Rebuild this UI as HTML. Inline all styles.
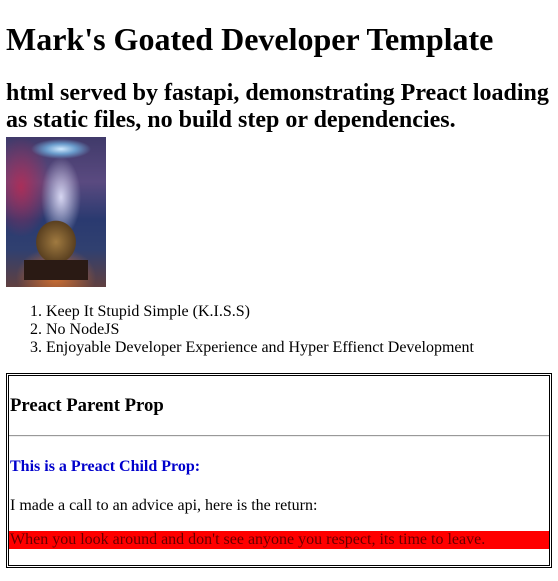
<!DOCTYPE html>
<html><head><meta charset="utf-8"><style>
body{margin:8px 6px;font-family:"Liberation Serif",serif;color:#000;background:#fff;font-size:16px}
h1{font-size:32px;margin:21.44px 0;line-height:37px}
h2{font-size:24px;margin:19.92px 0 2px;line-height:27.6px}
.img{width:100px;height:150px;position:relative;overflow:hidden;
background:
radial-gradient(ellipse 30px 10px at 55px 12px,#cfe9ff 0,#6a9ccc 50%,transparent 100%),
radial-gradient(ellipse 20px 40px at 55px 60px,rgba(230,230,255,.9),transparent),
radial-gradient(ellipse 30px 50px at 15px 50px,rgba(190,40,80,.8),transparent),
radial-gradient(ellipse 40px 30px at 50px 140px,#d07030,transparent),
linear-gradient(#403a6a 0%,#5a4a80 30%,#2a3a70 55%,#304070 75%,#604040 100%)}
.body{position:absolute;left:22px;top:70px;width:56px;height:60px;background:radial-gradient(ellipse 28px 30px at 28px 35px,#a07a40,#5a4020 70%,transparent 72%)}
.base{position:absolute;left:18px;top:123px;width:64px;height:20px;background:#2a1a14}
ol{margin:16px 0;padding-left:40px;line-height:18px}
.box{border:3px double #000;}
h3{font-size:18.72px;margin:18.72px 0 18.72px 1px;line-height:21px}
hr{margin:8px 0;border:0;border-top:1px solid #999;border-bottom:1px solid #eee}
h4{color:#0000cc;font-size:16px;margin:21.28px 1px;line-height:18px}
p{margin:16px 1px;line-height:18px}
.red{background:#f00;margin:16px 0;padding-left:1px;color:#600}
</style></head><body>
<h1>Mark's Goated Developer Template</h1>
<h2>html served by fastapi, demonstrating Preact loading as static files, no build step or dependencies.</h2>
<div class="img"><div class="body"></div><div class="base"></div></div>
<ol><li>Keep It Stupid Simple (K.I.S.S)</li><li>No NodeJS</li><li>Enjoyable Developer Experience and Hyper Effienct Development</li></ol>
<div class="box">
<h3>Preact Parent Prop</h3>
<hr>
<h4>This is a Preact Child Prop:</h4>
<p>I made a call to an advice api, here is the return:</p>
<p class="red">When you look around and don't see anyone you respect, its time to leave.</p>
</div>
</body></html>
